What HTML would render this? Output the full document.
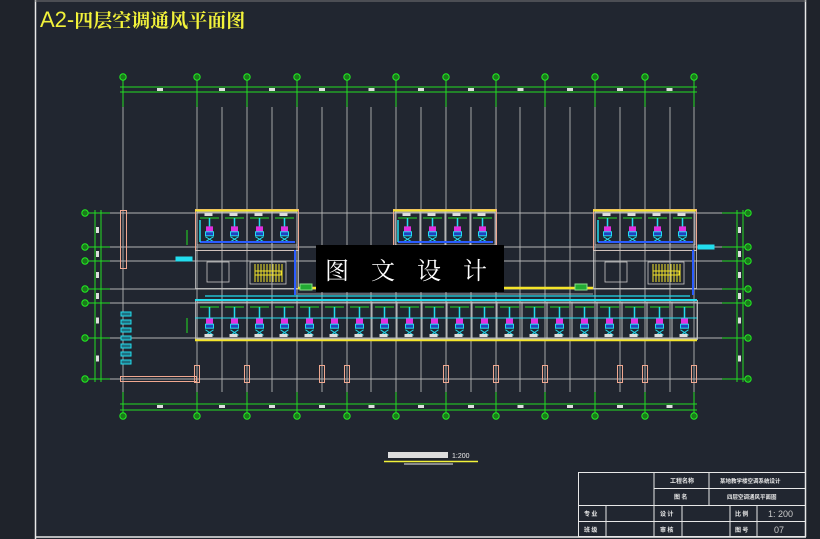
<!DOCTYPE html>
<html><head><meta charset="utf-8">
<style>
html,body{margin:0;padding:0;background:#212630;}
body{width:820px;height:539px;overflow:hidden;position:relative;}
svg{position:absolute;left:0;top:0;}
.cn{font-family:"Liberation Serif","Noto Serif CJK SC",serif;}
</style></head>
<body>
<svg id="s" width="820" height="539" viewBox="0 0 820 539" xmlns="http://www.w3.org/2000/svg">
<rect x="0" y="0" width="820" height="539" fill="#212630"/>
<rect x="0" y="0" width="35" height="539" fill="#1f232b"/>
<rect x="806" y="0" width="14" height="539" fill="#1f232b"/>
<line x1="35.5" y1="0" x2="35.5" y2="539" stroke="#e8e8e8" stroke-width="1.5"/>
<line x1="805.5" y1="0" x2="805.5" y2="537" stroke="#e8e8e8" stroke-width="1.5"/>
<line x1="35" y1="537" x2="806" y2="537" stroke="#e8e8e8" stroke-width="1.5"/>
<line x1="35" y1="1" x2="806" y2="1" stroke="#777" stroke-width="1"/>
<text x="40" y="27" fill="#f2f23a" font-size="22" font-family="Liberation Sans,'Noto Serif CJK SC',serif">A2-<tspan font-family="'Noto Serif CJK SC',serif" font-size="19" font-weight="bold">四层空调通风平面图</tspan></text>
<g id="g"></g>
<rect x="316" y="245" width="188" height="47" fill="#000"/>
<text x="410" y="279" fill="#fff" font-size="24" text-anchor="middle" class="cn" letter-spacing="8">图 文 设 计</text>
<rect x="388" y="452" width="60" height="6" fill="#ddd"/>
<text x="452" y="458" fill="#eee" font-size="7" font-family="Liberation Sans,sans-serif">1:200</text>
<line x1="384" y1="461.5" x2="478" y2="461.5" stroke="#f2f23a" stroke-width="1.5"/>
<line x1="404" y1="464" x2="453" y2="464" stroke="#eee" stroke-width="1"/>
<g stroke="#e8e8e8" stroke-width="1" fill="none">
<rect x="578.5" y="472.5" width="227" height="64"/>
<line x1="654" y1="472" x2="654" y2="537"/>
<line x1="709" y1="472" x2="709" y2="505"/>
<line x1="654" y1="488.5" x2="806" y2="488.5"/>
<line x1="578" y1="505.5" x2="806" y2="505.5"/>
<line x1="578" y1="521.5" x2="806" y2="521.5"/>
<line x1="606" y1="505" x2="606" y2="537"/>
<line x1="682" y1="505" x2="682" y2="537"/>
<line x1="730" y1="505" x2="730" y2="537"/>
<line x1="757" y1="505" x2="757" y2="537"/>
</g>
<g fill="#e8e8e8" font-size="6" font-weight="bold" font-family="'Noto Sans CJK SC',sans-serif">
<text x="670" y="483">工程名称</text>
<text x="720" y="483" font-size="5.5">某地教学楼空调系统设计</text>
<text x="674" y="499">图 名</text>
<text x="727" y="499" font-size="5.5">四层空调通风平面图</text>
<text x="584" y="516">专 业</text>
<text x="584" y="532">班 级</text>
<text x="660" y="516">设 计</text>
<text x="660" y="532">审 核</text>
<text x="735" y="516">比 例</text>
<text x="735" y="532">图 号</text>
</g>
<text x="768" y="517" fill="#ccc" font-size="9" font-family="Liberation Sans,sans-serif">1: 200</text>
<text x="774" y="533" fill="#ccc" font-size="9" font-family="Liberation Sans,sans-serif">07</text>
</svg>
<script>
var g=document.getElementById('g'),h='';
function L(x1,y1,x2,y2,c,w){h+='<line x1="'+x1+'" y1="'+y1+'" x2="'+x2+'" y2="'+y2+'" stroke="'+c+'" stroke-width="'+(w||1)+'"/>';}
function R(x,y,w,hh,c,f,sw){h+='<rect x="'+x+'" y="'+y+'" width="'+w+'" height="'+hh+'" stroke="'+c+'" fill="'+(f||'none')+'" stroke-width="'+(sw||1)+'"/>';}
function C(x,y){h+='<circle cx="'+x+'" cy="'+y+'" r="3.2" stroke="#22ee22" fill="#1a7a1a" stroke-width="1"/>';}
var G='#22dd22',W='#c8c8c8',Y='#f5e52a',CY='#22ddee',P='#f0a890';
var xs=[123,197,247,297,347,396,446,496,545,595,645,694];
var ys=[213,247,261,289,303,338,379];
var gx=xs.concat([222,272,322,371,421,471,520,570,620,670]);
gx.forEach(function(x){L(x,107,x,392,'#b4b4b4',0.9);});
ys.forEach(function(y){L(100,y,732,y,'#b4b4b4',0.9);});
L(120,87,697,87,G);L(120,92,697,92,G);L(120,404,697,404,G);L(120,410,697,410,G);
xs.forEach(function(x){L(x,80,x,107,G);C(x,77);L(x,392,x,413,G);C(x,416);});
for(var i=0;i<xs.length-1;i++){var m=(xs[i]+xs[i+1])/2;R(m-3,88,6,3,'none','#ddd');R(m-3,405,6,3,'none','#ddd');}
L(95,210,95,382,G);L(101,210,101,382,G);L(737,210,737,382,G);L(743,210,743,382,G);
ys.forEach(function(y){C(85,y);L(88,y,110,y,G);C(748,y);L(722,y,745,y,G);});
for(i=0;i<ys.length-1;i++){var m=(ys[i]+ys[i+1])/2;R(96,m-3,3,6,'none','#ddd');R(738,m-3,3,6,'none','#ddd');}
R(120.5,210.5,6,58,P);R(120.5,376.5,76,5,P);
[197,247,322,347,446,496,545,620,645,694].forEach(function(x){R(x-2.5,365.5,5,17,P);});
for(i=0;i<7;i++)R(121,312+i*8,10,4,CY,'#1f6f7f');
function room(x,y,w,hh,top){
 R(x,y,w,hh,W,'none',0.8);
 var cx=x+w/2;
 L(x+3,top?y+6:y+5,x+w-3,top?y+6:y+5,G,1);
 L(cx,top?y+6:y+5,cx,y+hh*0.55,CY,1.5);
 R(cx-3,y+hh*0.45,6,6,'#e030e0','#e030e0');
 R(cx-4,y+hh*0.6,8,4,CY,'#2040c0');
 L(cx-4,y+hh*0.75,cx+4,y+hh*0.9,CY);L(cx+4,y+hh*0.75,cx-4,y+hh*0.9,CY);
 R(cx-5,top?y+1:y+hh-5,8,3,'none','#ddd');
}
function topBlock(x){
 R(x+0.5,209.5,103,41,P,'none',1);L(x,210.5,x+103,210.5,Y,2);
 for(var k=0;k<4;k++)room(x+2+k*25,212,25,33,true);
 L(x+5,242,x+100,242,'#2a5cff',2);L(x+5,220,x+5,242,CY,1.5);
}
topBlock(195);topBlock(393);topBlock(593);
[[195,250],[593,250]].forEach(function(p){var x=p[0];
 R(x+0.5,250.5,103,38,W,'none',0.8);
 R(x+55,262,36,22,W,'none',0.8);
 for(var k=0;k<10;k++)L(x+60+k*3,264,x+60+k*3,282,Y,1);
 R(x+60,271,26,4,Y);
 R(x+12,262,22,20,W,'none',0.8);
 L(x+100,250,x+100,295,'#2a5cff',2);
});
L(298,288,593,288,Y,2.5);L(298,294,593,294,W,0.8);
R(300,284,12,6,'#8d8','#2a3');R(575,284,12,6,'#8d8','#2a3');
R(195.5,300.5,502,39,W,'none',0.8);
L(195,340,697,340,Y,2.5);L(195,300,697,300,CY,2);L(205,296,690,296,CY,1.2);
for(i=0;i<20;i++)room(197+i*25,302,25,37,false);
L(195,318,697,318,CY,1);
R(176,257,16,4,CY,CY);R(698,245,16,4,CY,CY);
L(187,230,187,245,G);L(187,318,187,333,G);
g.innerHTML=h;
</script>
</body></html>
